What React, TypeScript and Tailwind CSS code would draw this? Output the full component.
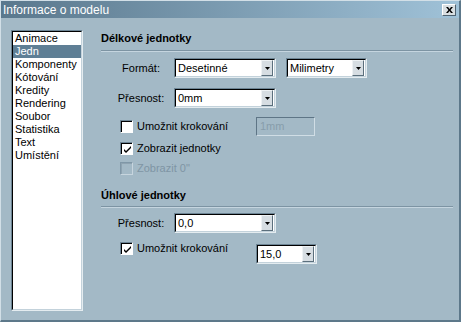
import React from 'react';

const font = { fontFamily: '"Liberation Sans", Arial, sans-serif' };

const items = ['Animace', 'Jedn', 'Komponenty', 'Kótování', 'Kredity', 'Rendering', 'Soubor', 'Statistika', 'Text', 'Umístění'];

function Arrow() {
  return (
    <div className="w-[12px] h-[16px] mr-[1px] bg-[#d6dde2] border-t border-l border-t-[#eef2f4] border-l-[#eef2f4] border-b border-r border-b-[#5b6f7c] border-r-[#5b6f7c] flex items-center justify-center">
      <svg width="5" height="3" viewBox="0 0 5 3">
        <path d="M0 0h5L2.5 3z" fill="#000" />
      </svg>
    </div>
  );
}

function Select({ value, w }: { value: string; w: string }) {
  return (
    <div className={`${w} h-[20px] border-t border-l border-t-[#6c8494] border-l-[#6c8494] border-b border-r border-b-[#e4ecf0] border-r-[#e4ecf0]`}>
      <div className="h-full border-t border-l border-black border-b border-r border-b-[#c3d2db] border-r-[#c3d2db] bg-white flex items-center justify-between">
        <span className="pl-[2px] text-[11px] leading-[13px] text-black">{value}</span>
        <Arrow />
      </div>
    </div>
  );
}

function Check({ checked, disabled }: { checked?: boolean; disabled?: boolean }) {
  return (
    <div className={`w-[13px] h-[13px] shrink-0 border-t border-l border-b border-r ${disabled ? 'border-t-[#7f97a7] border-l-[#7f97a7] border-b-[#c7d5de] border-r-[#c7d5de]' : 'border-t-[#6c8494] border-l-[#6c8494] border-b-white border-r-white'}`}>
      <div className={`w-full h-full border-t border-l ${disabled ? 'border-[#8ea3b1] bg-[#a3b9c6]' : 'border-black bg-white'} flex items-center justify-center`}>
        {checked && (
          <svg width="7" height="7" viewBox="0 0 7 7">
            <path d="M0 3l2 2 5-5v2l-5 5-2-2z" fill="#000" />
          </svg>
        )}
      </div>
    </div>
  );
}

function Heading({ text }: { text: string }) {
  return <div className="text-[11px] leading-[13px] font-bold text-black">{text}</div>;
}

function Line() {
  return <div className="h-0 border-t border-[#7d94a3] border-b border-b-[#c5d5df]" />;
}

export default function App() {
  return (
    <div style={font} className="w-[461px] h-[322px] flex flex-col bg-[#a3b9c6] border-t border-l border-[#d2dfe7] border-r-2 border-b-2 border-r-[#5d788a] border-b-[#5d788a] overflow-hidden select-none">
      <div className="h-[17px] shrink-0 flex items-center justify-between pl-[2px] pr-[3px] bg-gradient-to-r from-[#5a788d] to-[#a0c2d8]">
        <span className="text-[12px] leading-[14px] text-white">Informace o modelu</span>
        <div className="w-[14px] h-[12px] bg-[#d9dfe2] border-t border-l border-white border-b border-r border-b-[#4f6270] border-r-[#4f6270] flex items-center justify-center">
          <svg width="7" height="6" viewBox="0 0 7 6">
            <path d="M0 0h2l1.5 2L5 0h2L4.5 3 7 6H5L3.5 4 2 6H0l2.5-3z" fill="#000" />
          </svg>
        </div>
      </div>

      <div className="flex flex-1 pt-[12px] pl-[10px] pr-[6px]">
        <div className="w-[72px] h-[281px] shrink-0 border-t border-l border-t-[#6c8494] border-l-[#6c8494] border-b border-r border-b-[#e4ecf0] border-r-[#e4ecf0]">
          <div className="h-full bg-white border-t border-l border-black border-b border-r border-b-[#c3d2db] border-r-[#c3d2db]">
            {items.map((it) => (
              <div key={it} className={`h-[13px] pl-[2px] text-[11px] leading-[13px] ${it === 'Jedn' ? 'bg-[#5f7f95] text-white' : 'text-black'}`}>
                {it}
              </div>
            ))}
          </div>
        </div>

        <div className="flex-1 ml-[18px] flex flex-col">
          <div className="mt-[2px]">
            <Heading text="Délkové jednotky" />
          </div>
          <div className="mt-[5px]">
            <Line />
          </div>

          <div className="mt-[6px] flex items-center pl-[11px]">
            <div className="w-[58px] text-center text-[11px] leading-[13px] text-black">Formát:</div>
            <div className="ml-[4px]">
              <Select value="Desetinné" w="w-[102px]" />
            </div>
            <div className="ml-[10px]">
              <Select value="Milimetry" w="w-[81px]" />
            </div>
          </div>

          <div className="mt-[10px] flex items-center pl-[11px]">
            <div className="w-[58px] text-center text-[11px] leading-[13px] text-black">Přesnost:</div>
            <div className="ml-[4px]">
              <Select value="0mm" w="w-[102px]" />
            </div>
          </div>

          <div className="mt-[9px] flex items-center pl-[19px] h-[19px]">
            <div className="w-[136px] flex items-center gap-[4px]">
              <Check />
              <span className="text-[11px] leading-[13px] text-black">Umožnit krokování</span>
            </div>
            <div className="w-[59px] h-[19px] border-t border-l border-t-[#5e7586] border-l-[#5e7586] border-b border-r border-b-[#d0dde5] border-r-[#d0dde5] flex items-center pl-[3px]">
              <span className="text-[11px] leading-[13px] text-[#879dab]">1mm</span>
            </div>
          </div>

          <div className="mt-[6px] flex items-center pl-[19px] h-[13px] gap-[4px]">
            <Check checked />
            <span className="text-[11px] leading-[13px] text-black">Zobrazit jednotky</span>
          </div>

          <div className="mt-[7px] flex items-center pl-[19px] h-[13px] gap-[4px]">
            <Check disabled />
            <span className="text-[11px] leading-[13px] text-[#7f95a4]">Zobrazit 0"</span>
          </div>

          <div className="mt-[14px]">
            <Heading text="Úhlové jednotky" />
          </div>
          <div className="mt-[4px]">
            <Line />
          </div>

          <div className="mt-[5px] flex items-center pl-[11px]">
            <div className="w-[58px] text-center text-[11px] leading-[13px] text-black">Přesnost:</div>
            <div className="ml-[4px]">
              <Select value="0,0" w="w-[102px]" />
            </div>
          </div>

          <div className="mt-[9px] flex items-start pl-[19px]">
            <div className="w-[136px] flex items-center gap-[4px] h-[13px]">
              <Check checked />
              <span className="text-[11px] leading-[13px] text-black">Umožnit krokování</span>
            </div>
            <div className="mt-[2px]">
              <Select value="15,0" w="w-[61px]" />
            </div>
          </div>
        </div>
      </div>
    </div>
  );
}
